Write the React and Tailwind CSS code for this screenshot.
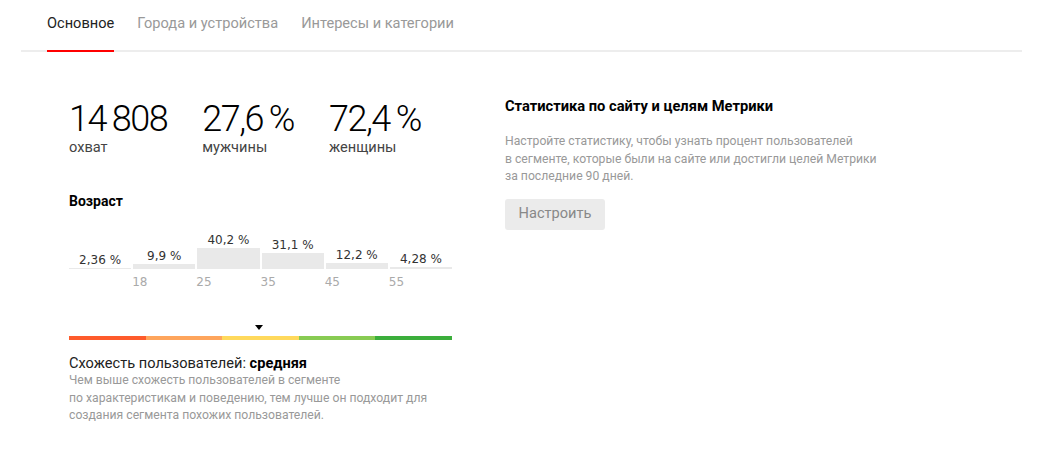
import React from "react";

const bars = [
  { label: "2,36 %", v: 2.36, tick: null },
  { label: "9,9 %", v: 9.9, tick: "18" },
  { label: "40,2 %", v: 40.2, tick: "25" },
  { label: "31,1 %", v: 31.1, tick: "35" },
  { label: "12,2 %", v: 12.2, tick: "45" },
  { label: "4,28 %", v: 4.28, tick: "55" },
];

const scale = ["bg-[#fe5b2b]", "bg-[#fea55c]", "bg-[#ffd95c]", "bg-[#88cb53]", "bg-[#3bae3b]"];

export default function App() {
  return (
    <div className="w-[1043px] h-[449px] bg-white overflow-hidden font-['Roboto',sans-serif] text-[#222]">
      <div className="mx-[21px] flex h-[52px] border-b-2 border-[#ededed] pl-[26px] gap-[23px]">
        <div className="-mb-[2px] border-b-2 border-[#ff0000] pt-[13px] text-[14.6px] leading-[20px] text-[#222]">
          Основное
        </div>
        <div className="pt-[13px] text-[14.6px] leading-[20px] text-[#999]">Города и устройства</div>
        <div className="pt-[13px] text-[14.6px] leading-[20px] text-[#999]">Интересы и категории</div>
      </div>

      <div className="flex pl-[69px]">
        <div className="w-[383px] shrink-0 pt-[48px]">
          <div className="flex gap-[35px]">
            {[
              ["14\u2009808", "охват"],
              ["27,6\u2009%", "мужчины"],
              ["72,4\u2009%", "женщины"],
            ].map(([n, l]) => (
              <div key={l} className="whitespace-nowrap">
                <div className="text-[36px] leading-[38px] tracking-[-1.5px] font-light text-black">{n}</div>
                <div className="text-[14.6px] leading-[18px] text-[#444]">{l}</div>
              </div>
            ))}
          </div>

          <div className="mt-[36px] text-[14px] leading-[18px] font-bold text-black">Возраст</div>

          <div className="flex h-[59px] gap-[2px] font-['DejaVu_Sans',sans-serif]">
            {bars.map((b) => (
              <div key={b.label} className="flex-1 flex flex-col justify-end items-center">
                <div className="mb-[1px] text-[12px] leading-[14px] text-[#333] whitespace-nowrap">{b.label}</div>
                <div
                  className="w-full bg-[#e9e9e9]"
                  style={{ height: Math.max(1, Math.round(b.v * 0.52)) }}
                />
              </div>
            ))}
          </div>
          <div className="mt-[6px] flex gap-[2px] font-['DejaVu_Sans',sans-serif]">
            {bars.map((b) => (
              <div key={b.label} className="flex-1 text-[12px] leading-[14px] text-[#aaa] -ml-[1px]">
                {b.tick || "\u00a0"}
              </div>
            ))}
          </div>

          <div className="mt-[36px] ml-[186px] w-0 h-0 border-l-[4px] border-r-[4px] border-t-[5px] border-l-transparent border-r-transparent border-t-black" />
          <div className="mt-[6px] flex h-[4px]">
            {scale.map((c) => (
              <div key={c} className={`flex-1 ${c}`} />
            ))}
          </div>

          <div className="mt-[14px] text-[14.6px] leading-[18px] text-[#222] whitespace-nowrap">
            Схожесть пользователей: <span className="font-bold text-black">средняя</span>
          </div>
          <div className="text-[12.2px] leading-[17.5px] text-[#999] whitespace-nowrap">
            Чем выше схожесть пользователей в сегменте
            <br />
            по характеристикам и поведению, тем лучше он подходит для
            <br />
            создания сегмента похожих пользователей.
          </div>
        </div>

        <div className="ml-[53px] pt-[44px] whitespace-nowrap">
          <div className="text-[14.7px] leading-[20px] font-bold text-black">Статистика по сайту и целям Метрики</div>
          <div className="mt-[17px] text-[12.2px] leading-[17.5px] text-[#999]">
            Настройте статистику, чтобы узнать процент пользователей
            <br />
            в сегменте, которые были на сайте или достигли целей Метрики
            <br />
            за последние 90 дней.
          </div>
          <button className="mt-[13px] h-[31px] w-[100px] rounded-[3px] bg-[#ebebeb] text-[14.6px] text-[#888]">
            Настроить
          </button>
        </div>
      </div>
    </div>
  );
}
